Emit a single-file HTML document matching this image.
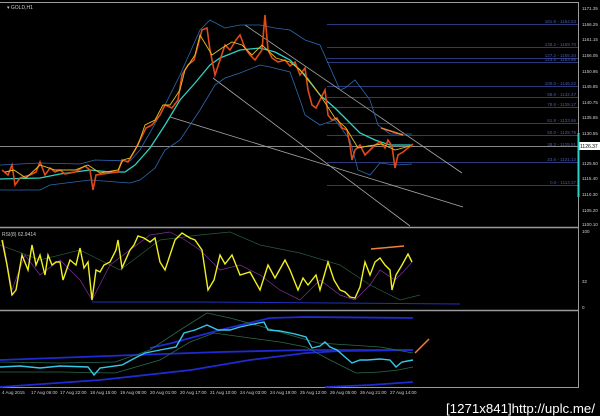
<!DOCTYPE html>
<html><head><meta charset="utf-8"><style>
html,body{margin:0;padding:0;background:#000;width:600px;height:416px;overflow:hidden}
svg{display:block}
text{font-family:"Liberation Sans",sans-serif}
</style></head><body>
<svg width="600" height="416" viewBox="0 0 600 416" xmlns="http://www.w3.org/2000/svg">
<rect width="600" height="416" fill="#000"/>
<line x1="0" y1="2.5" x2="579" y2="2.5" stroke="#9a9a9a"/>
<line x1="578.5" y1="2" x2="578.5" y2="388" stroke="#9a9a9a"/>
<line x1="0" y1="227.5" x2="579" y2="227.5" stroke="#9a9a9a" stroke-width="1.5"/>
<line x1="0" y1="310.5" x2="579" y2="310.5" stroke="#9a9a9a" stroke-width="1.5"/>
<line x1="0" y1="387.5" x2="579" y2="387.5" stroke="#9a9a9a"/>
<text x="7" y="9" font-size="5" fill="#ccc">▾ GOLD,H1</text>
<g stroke="#2a3a7a" stroke-width="1">
<line x1="327" y1="24.5" x2="578" y2="24.5"/><line x1="327" y1="47.5" x2="578" y2="47.5"/>
<line x1="327" y1="58.5" x2="578" y2="58.5"/><line x1="327" y1="62.5" x2="578" y2="62.5"/>
<line x1="327" y1="86.5" x2="578" y2="86.5"/><line x1="327" y1="97.5" x2="578" y2="97.5"/>
<line x1="327" y1="107.5" x2="578" y2="107.5"/><line x1="327" y1="123.5" x2="578" y2="123.5"/>
<line x1="327" y1="135.5" x2="578" y2="135.5"/><line x1="327" y1="162.5" x2="578" y2="162.5"/>
<line x1="327" y1="185.5" x2="578" y2="185.5"/>
</g>
<g font-size="4.5" fill="#4a5ab0" text-anchor="end">
<text x="576" y="23">161.8 - 1164.53</text><text x="576" y="46">138.2 - 1159.70</text>
<text x="576" y="57">127.2 - 1155.34</text><text x="576" y="61">123.6 - 1153.95</text>
<text x="576" y="85">100.0 - 1146.22</text><text x="576" y="96">88.6 - 1142.47</text>
<text x="576" y="106">78.6 - 1139.17</text><text x="576" y="122">61.8 - 1133.66</text>
<text x="576" y="134">50.0 - 1129.79</text><text x="576" y="146">38.2 - 1125.91</text>
<text x="576" y="161">23.6 - 1121.12</text><text x="576" y="184">0.0 - 1113.37</text>
</g>
<line x1="0" y1="146.5" x2="578" y2="146.5" stroke="#888"/>
<g stroke="#a8a8a8" stroke-width="0.8">
<line x1="245" y1="25" x2="462" y2="173"/>
<line x1="213" y1="78" x2="410" y2="226"/>
<line x1="170" y1="117" x2="463" y2="207"/>
</g>
<g fill="none" stroke="#2c6ab0" stroke-width="0.8">
<polyline points="0,165 40,163 80,164 95,160 130,161 140,150 160,115 180,75 200,30 210,20 225,28 240,25 260,25 275,28 290,30 305,40 320,45 340,90 345,88 355,80 370,100 378,125 390,134 412,134"/>
<polyline points="0,190 40,190 50,185 90,180 130,183 140,180 155,168 165,150 180,140 200,110 215,85 225,78 240,73 260,65 270,67 290,72 300,100 305,115 320,125 335,120 350,140 358,170 370,175 380,163 395,165 412,164"/>
</g>
<polyline fill="none" stroke="#2ed3c0" stroke-width="1.3" points="0,179 40,178 60,174 90,170 110,172 125,172 135,165 150,148 165,125 180,100 195,83 210,65 220,58 240,50 260,48 275,52 290,60 305,75 320,95 335,108 345,118 360,133 375,140 390,145 412,145"/>
<polyline fill="none" stroke="#e04a1a" stroke-width="1.6" points="2,170 8,175 12,165 15,185 20,178 30,175 36,172 40,162 45,175 50,168 55,172 60,170 65,174 75,172 85,166 90,170 93,190 96,175 110,173 118,172 122,160 128,162 135,150 140,140 146,128 152,125 160,115 165,105 172,108 178,100 182,75 188,65 194,60 198,45 202,30 207,28 210,50 213,65 215,75 220,60 225,45 230,50 236,40 240,35 245,48 250,55 255,60 262,50 265,15 268,50 272,58 278,62 285,60 290,66 295,62 300,75 305,68 308,90 312,105 316,108 320,100 325,90 328,115 332,120 337,118 342,128 347,130 350,145 352,160 355,150 360,145 365,155 370,150 375,145 380,142 385,148 388,140 392,146 395,168 398,155 403,152 408,148 413,144"/>
<polyline fill="none" stroke="#e8c020" stroke-width="0.9" points="5,172 14,170 26,178 40,165 55,170 75,170 88,165 100,173 118,170 123,160 130,158 138,145 145,125 155,120 163,105 170,105 180,90 185,70 195,55 200,35 212,55 222,48 232,42 242,45 252,55 262,45 276,58 290,62 300,70 320,95 335,118 346,128 358,148 368,146 382,144 395,150 410,146"/>
<g font-size="4.5" fill="#ccc">
<text x="582" y="10">1171.35</text><text x="582" y="26">1166.25</text><text x="582" y="41">1161.15</text>
<text x="582" y="57">1156.05</text><text x="582" y="73">1150.95</text><text x="582" y="88">1145.85</text>
<text x="582" y="104">1140.75</text><text x="582" y="119">1135.65</text><text x="582" y="135">1130.55</text>
<text x="582" y="165">1125.50</text><text x="582" y="180">1115.40</text><text x="582" y="196">1110.30</text>
<text x="582" y="212">1105.20</text><text x="582" y="226">1100.10</text>
<text x="582" y="233">100</text><text x="582" y="283">32</text><text x="582" y="309">0</text>
</g>
<rect x="578" y="142" width="22" height="8" fill="#fff"/>
<text x="580" y="148" font-size="5" fill="#000">1126.37</text>
<line x1="578.5" y1="133" x2="578.5" y2="197" stroke="#30d0c8" stroke-width="2"/>
<line x1="381" y1="128" x2="403" y2="135" stroke="#f08040" stroke-width="1.5"/>
<!-- RSI -->
<text x="2" y="236" font-size="5" fill="#ccc">RSI(8) 62.9414</text>
<polyline fill="none" stroke="#2030c0" stroke-width="1" points="92,302 200,302 460,304"/>
<polyline fill="none" stroke="#2a5a3a" stroke-width="0.7" points="0,245 40,260 80,250 120,270 160,240 200,235 230,232 260,245 300,253 340,265 370,285 400,300 420,295"/>
<polyline fill="none" stroke="#8030a0" stroke-width="0.7" points="3,240 12,290 25,255 40,275 60,260 80,280 92,300 110,265 130,250 150,235 170,232 185,240 200,250 220,270 240,265 260,275 280,290 300,300 320,280 340,295 355,300 370,285 380,270 395,280 405,270 412,262"/>
<polyline fill="none" stroke="#f0f020" stroke-width="1.4" points="2,240 7,265 12,295 16,290 22,255 28,270 32,245 36,265 40,255 45,275 48,255 52,265 56,262 60,262 63,280 70,260 76,265 80,248 84,268 88,262 92,300 96,270 100,272 104,265 110,262 116,250 118,240 122,268 130,250 134,245 138,236 144,238 150,242 155,238 160,262 165,270 170,255 175,240 182,233 190,238 195,240 202,250 208,290 214,280 220,255 225,264 232,255 240,275 250,272 260,290 268,265 275,278 285,260 290,270 298,290 303,278 308,285 316,275 320,290 328,262 334,280 340,290 345,292 350,297 355,298 360,287 365,262 370,275 375,262 380,258 385,265 390,270 392,290 396,275 402,265 408,254 412,262"/>
<line x1="371" y1="249" x2="404" y2="246" stroke="#f08040" stroke-width="1.5"/>
<!-- bottom panel -->
<g fill="none" stroke="#1f2ad0" stroke-width="1.8">
<polyline points="0,360 134,355 220,352 306,350 413,350"/>
<polyline points="0,387 100,380 191,370 250,360 306,353 340,351 413,350"/>
<polyline points="150,348 172,343 220,330 270,318 306,317 413,318"/>
<polyline points="325,387 370,385 413,382"/>
</g>
<g fill="none" stroke="#2a6a4a" stroke-width="0.8">
<polyline points="0,362 60,363 115,362 150,350 180,330 207,313 230,318 260,326 290,335 318,343 350,345 380,347 413,353"/>
<polyline points="0,372 60,372 115,373 160,360 190,342 214,333 250,338 280,342 306,347 330,360 356,373 380,372 398,370 413,367"/>
</g>
<polyline fill="none" stroke="#36c8e8" stroke-width="1.4" points="0,367 20,366 40,368 60,366 88,367 94,375 100,368 122,365 135,358 145,353 160,350 176,347 180,340 184,333 195,330 207,325 218,330 230,330 240,327 249,325 264,322 268,330 280,331 295,334 306,337 312,348 320,346 325,342 330,347 337,350 345,357 352,363 360,360 367,360 380,359 390,360 396,367 402,362 413,360"/>
<line x1="415" y1="353" x2="429" y2="339" stroke="#f08040" stroke-width="1.5"/>
<g font-size="4.5" fill="#ccc">
<text x="2" y="394">4 Aug 2015</text><text x="31" y="394">17 Aug 06:00</text><text x="60" y="394">17 Aug 22:00</text>
<text x="90" y="394">18 Aug 15:00</text><text x="120" y="394">19 Aug 08:00</text><text x="150" y="394">20 Aug 01:00</text>
<text x="180" y="394">20 Aug 17:00</text><text x="210" y="394">21 Aug 10:00</text><text x="240" y="394">24 Aug 03:00</text>
<text x="270" y="394">24 Aug 19:00</text><text x="300" y="394">25 Aug 12:00</text><text x="330" y="394">26 Aug 05:00</text>
<text x="360" y="394">26 Aug 21:00</text><text x="390" y="394">27 Aug 14:00</text>
</g>
<text x="446" y="413" font-size="13" fill="#fff" textLength="149" lengthAdjust="spacingAndGlyphs">[1271x841]http://uplc.me/</text>
</svg>
</body></html>
